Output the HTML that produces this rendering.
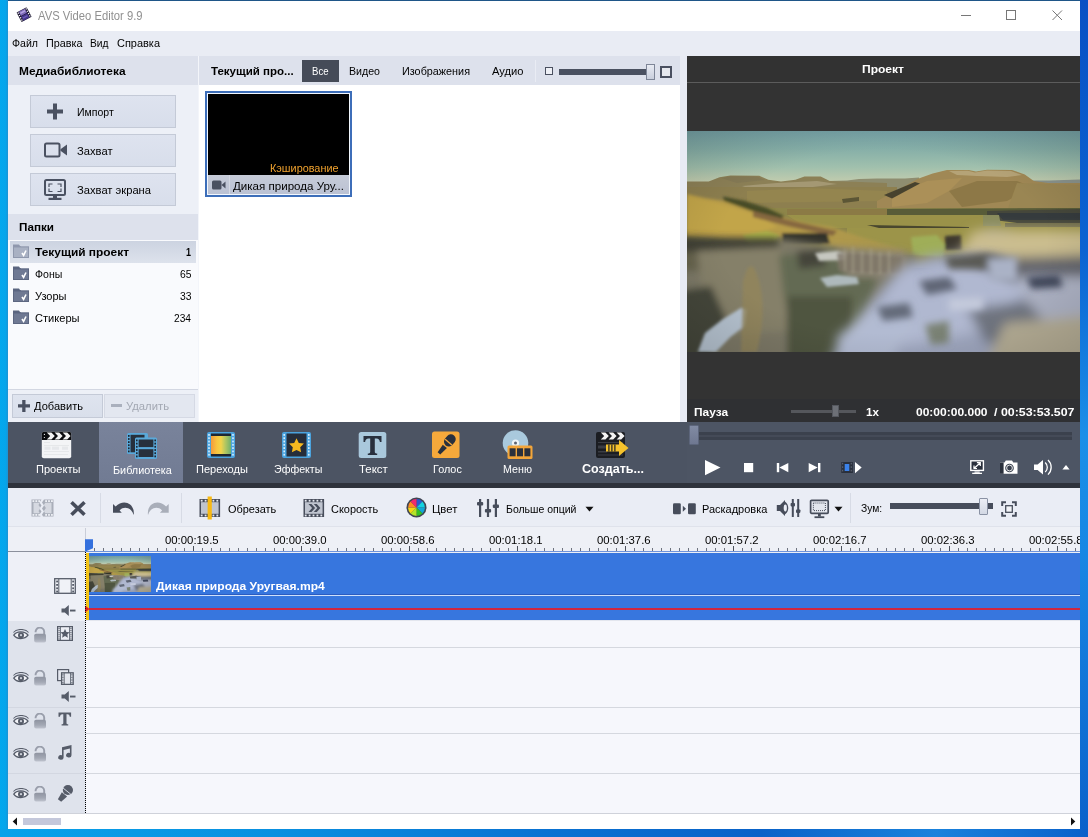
<!DOCTYPE html>
<html><head><meta charset="utf-8"><title>AVS Video Editor 9.9</title>
<style>
*{box-sizing:border-box;margin:0;padding:0}
html,body{width:1088px;height:837px;overflow:hidden}
body{position:relative;background:#eceff6;font-family:"Liberation Sans",sans-serif;font-size:11.5px;color:#111}
.a{position:absolute;display:block}
.t{position:absolute;white-space:nowrap;line-height:14px;transform-origin:0 0}
.b{font-weight:bold}
</style></head><body>
<div class="a" style="left:0px;top:0px;width:8px;height:837px;background:linear-gradient(90deg,#03a8ee 0,#05a5eb 70%,#1c93d4 100%);"></div>
<div class="a" style="left:1080px;top:0px;width:8px;height:837px;background:linear-gradient(#0950c4 0%,#0a63d2 30%,#1b8fe8 52%,#1787e4 66%,#0a60ca 100%);"></div>
<div class="a" style="left:0px;top:829px;width:1088px;height:8px;background:linear-gradient(90deg,#08a2ea 0%,#0a90e0 25%,#0a72d2 50%,#0a62c8 70%,#1a82dc 86%,#0a60ca 100%);"></div>
<div class="a" style="left:8px;top:0px;width:1072px;height:1px;background:#1f5688;"></div>
<div class="a" style="left:8px;top:1px;width:1072px;height:30px;background:#ffffff;"></div>
<svg class="a" style="left:14px;top:5px;" width="20" height="20" viewBox="0 0 20 20"><g transform="rotate(-28 10 9.700)"><rect x="4.400" y="4.300" width="11.400" height="10.800" rx="0.600" fill="#1c1731"/><rect x="6.700" y="4.700" width="6.800" height="4.700" fill="#7f6cbc"/><rect x="6.700" y="9.900" width="6.800" height="4.800" fill="#44358c"/><rect x="7.400" y="6" width="5.400" height="1.600" fill="#b4a4e0"/><rect x="7.400" y="11.400" width="5.400" height="1.500" fill="#6c5ab4"/><rect x="5.0" y="5.0" width="1.200" height="1.300" fill="#fff"/><rect x="5.0" y="7.6" width="1.200" height="1.300" fill="#fff"/><rect x="5.0" y="10.2" width="1.200" height="1.300" fill="#fff"/><rect x="5.0" y="12.8" width="1.200" height="1.300" fill="#fff"/><rect x="14.0" y="5.0" width="1.200" height="1.300" fill="#fff"/><rect x="14.0" y="7.6" width="1.200" height="1.300" fill="#fff"/><rect x="14.0" y="10.2" width="1.200" height="1.300" fill="#fff"/><rect x="14.0" y="12.8" width="1.200" height="1.300" fill="#fff"/></g></svg>
<div class="t" style="left:37.5px;top:8.84px;font-size:12px;color:#909090;transform:scaleX(0.9361);">AVS Video Editor 9.9</div>
<svg class="a" style="left:950px;top:4px;" width="120" height="24" viewBox="0 0 120 24"><g stroke="#777" stroke-width="1" fill="none"><path d="M11 11.500h10"/><rect x="56.500" y="6.500" width="9" height="9"/><path d="M102.500 6.500l9.500 9.500M112 6.500l-9.500 9.500"/></g></svg>
<div class="a" style="left:8px;top:31px;width:1072px;height:25px;background:#e9ecf4;"></div>
<div class="t" style="left:11.5px;top:36.02px;font-size:11.5px;color:#000;transform:scaleX(0.9196);">Файл</div>
<div class="t" style="left:45.5px;top:36.02px;font-size:11.5px;color:#000;transform:scaleX(0.9396);">Правка</div>
<div class="t" style="left:90px;top:36.02px;font-size:11.5px;color:#000;transform:scaleX(0.8892);">Вид</div>
<div class="t" style="left:117px;top:36.02px;font-size:11.5px;color:#000;transform:scaleX(0.9532);">Справка</div>
<div class="a" style="left:8px;top:56px;width:190px;height:366px;background:#edf0f7;"></div>
<div class="a" style="left:198px;top:56px;width:1px;height:366px;background:#f3f5fa;"></div>
<div class="a" style="left:8px;top:56px;width:190px;height:29px;background:#dde1ec;"></div>
<div class="t b" style="left:19px;top:64.02px;font-size:11.5px;color:#000;transform:scaleX(1.0337);">Медиабиблиотека</div>
<div class="a" style="left:30px;top:95px;width:146px;height:33px;background:linear-gradient(#dee3ef,#d8deeb);border:1px solid #c4cad7"></div>
<div class="a" style="left:30px;top:134px;width:146px;height:33px;background:linear-gradient(#dee3ef,#d8deeb);border:1px solid #c4cad7"></div>
<div class="a" style="left:30px;top:173px;width:146px;height:33px;background:linear-gradient(#dee3ef,#d8deeb);border:1px solid #c4cad7"></div>
<svg class="a" style="left:46px;top:103px;" width="18" height="17" viewBox="0 0 18 17"><path d="M7 0.5h4v6h6v4h-6v6h-4v-6h-6v-4h6z" fill="#4a5161"/></svg>
<div class="t" style="left:77px;top:105.02px;font-size:11.5px;color:#000;transform:scaleX(0.9128);">Импорт</div>
<svg class="a" style="left:44px;top:142px;" width="24" height="17" viewBox="0 0 24 17"><rect x="1" y="1.5" width="14.5" height="13" rx="1.5" fill="none" stroke="#4a5161" stroke-width="2"/><path d="M16.5 7.2L23 2.5v11l-6.5-4.7z" fill="#4a5161"/></svg>
<div class="t" style="left:77px;top:144.02px;font-size:11.5px;color:#000;transform:scaleX(0.9731);">Захват</div>
<svg class="a" style="left:44px;top:179px;" width="23" height="22" viewBox="0 0 23 22"><rect x="1" y="1" width="20" height="15" rx="1.5" fill="none" stroke="#4a5161" stroke-width="2"/><path d="M5 8V5h3.5M13.5 5H17v3M17 9.5v3h-3.5M8.500 12.5H5v-3" fill="none" stroke="#4a5161" stroke-width="1.2"/><rect x="9" y="16.5" width="4" height="2.5" fill="#4a5161"/><rect x="4.5" y="18.8" width="13" height="2.2" fill="#4a5161"/></svg>
<div class="t" style="left:77px;top:183.02px;font-size:11.5px;color:#000;transform:scaleX(0.9722);">Захват экрана</div>
<div class="a" style="left:8px;top:214px;width:190px;height:26px;background:#dde1ec;"></div>
<div class="t b" style="left:19px;top:220.02px;font-size:11.5px;color:#000;transform:scaleX(1.0165);">Папки</div>
<div class="a" style="left:8px;top:240px;width:190px;height:150px;background:#f9fafd;"></div>
<div class="a" style="left:10px;top:241px;width:186px;height:22px;background:linear-gradient(#ccd3e1,#dde2ec);"></div>
<svg class="a" style="left:13px;top:244px;" width="17" height="15" viewBox="0 0 17 15"><path d="M0 0.5h6l1.2 1.8H8V14H0z" fill="#8f98ad"/><rect x="0" y="2.3" width="16" height="11.7" fill="#8f98ad"/><rect x="1" y="3.5" width="14" height="9.5" fill="#a9b1c3"/><path d="M9 9l1.6 2.4L13 6.5" stroke="#fff" stroke-width="1.6" fill="none"/></svg>
<svg class="a" style="left:13px;top:266px;" width="17" height="15" viewBox="0 0 17 15"><path d="M0 0.5h6l1.2 1.8H8V14H0z" fill="#5c6680"/><rect x="0" y="2.3" width="16" height="11.7" fill="#5c6680"/><rect x="1" y="3.5" width="14" height="9.5" fill="#6f7993"/><path d="M9 9l1.6 2.4L13 6.5" stroke="#fff" stroke-width="1.6" fill="none"/></svg>
<svg class="a" style="left:13px;top:288px;" width="17" height="15" viewBox="0 0 17 15"><path d="M0 0.5h6l1.2 1.8H8V14H0z" fill="#5c6680"/><rect x="0" y="2.3" width="16" height="11.7" fill="#5c6680"/><rect x="1" y="3.5" width="14" height="9.5" fill="#6f7993"/><path d="M9 9l1.6 2.4L13 6.5" stroke="#fff" stroke-width="1.6" fill="none"/></svg>
<svg class="a" style="left:13px;top:310px;" width="17" height="15" viewBox="0 0 17 15"><path d="M0 0.5h6l1.2 1.8H8V14H0z" fill="#5c6680"/><rect x="0" y="2.3" width="16" height="11.7" fill="#5c6680"/><rect x="1" y="3.5" width="14" height="9.5" fill="#6f7993"/><path d="M9 9l1.6 2.4L13 6.5" stroke="#fff" stroke-width="1.6" fill="none"/></svg>
<div class="t b" style="left:35px;top:245.02px;font-size:11.5px;color:#000;transform:scaleX(1.0351);">Текущий проект</div>
<div class="t b" style="left:186px;top:245.02px;font-size:11.5px;color:#000;transform:scaleX(0.7817);">1</div>
<div class="t" style="left:35px;top:267.02px;font-size:11.5px;color:#000;transform:scaleX(0.9175);">Фоны</div>
<div class="t" style="left:179.5px;top:267.02px;font-size:11.5px;color:#000;transform:scaleX(0.8990);">65</div>
<div class="t" style="left:35px;top:289.02px;font-size:11.5px;color:#000;transform:scaleX(0.9586);">Узоры</div>
<div class="t" style="left:179.5px;top:289.02px;font-size:11.5px;color:#000;transform:scaleX(0.8990);">33</div>
<div class="t" style="left:35px;top:311.02px;font-size:11.5px;color:#000;transform:scaleX(0.9629);">Стикеры</div>
<div class="t" style="left:174px;top:311.02px;font-size:11.5px;color:#000;transform:scaleX(0.8860);">234</div>
<div class="a" style="left:8px;top:389px;width:190px;height:1px;background:#d3d7e2;"></div>
<div class="a" style="left:12px;top:394px;width:91px;height:24px;background:linear-gradient(#dfe4ef,#d9dfeb);border:1px solid #c4cad7"></div>
<div class="a" style="left:104px;top:394px;width:91px;height:24px;background:#e3e7f0;border:1px solid #d5d9e4"></div>
<svg class="a" style="left:18px;top:400px;" width="12" height="12" viewBox="0 0 12 12"><path d="M4.2 0h3.3v4.2H12v3.300H7.500V12H4.200V7.500H0V4.200h4.200z" fill="#4a5161"/></svg>
<div class="t" style="left:34px;top:398.52px;font-size:11.5px;color:#000;transform:scaleX(0.9641);">Добавить</div>
<div class="a" style="left:111px;top:404px;width:11px;height:3px;background:#aab0bd;"></div>
<div class="t" style="left:126px;top:398.52px;font-size:11.5px;color:#a3a8b3;transform:scaleX(0.9794);">Удалить</div>
<div class="a" style="left:199px;top:56px;width:481px;height:366px;background:#ffffff;"></div>
<div class="a" style="left:199px;top:56px;width:481px;height:29px;background:#dde1ec;"></div>
<div class="a" style="left:680px;top:56px;width:7px;height:366px;background:#e8ebf4;"></div>
<div class="t b" style="left:211px;top:64.02px;font-size:11.5px;color:#000;transform:scaleX(1.0010);">Текущий про...</div>
<div class="a" style="left:302px;top:60px;width:37px;height:22px;background:#454b58;"></div>
<div class="t" style="left:311.5px;top:64.02px;font-size:11.5px;color:#fff;transform:scaleX(0.8326);">Все</div>
<div class="t" style="left:349px;top:64.02px;font-size:11.5px;color:#000;transform:scaleX(0.9227);">Видео</div>
<div class="t" style="left:402px;top:64.02px;font-size:11.5px;color:#000;transform:scaleX(0.9409);">Изображения</div>
<div class="t" style="left:491.5px;top:64.02px;font-size:11.5px;color:#000;transform:scaleX(0.9710);">Аудио</div>
<div class="a" style="left:535px;top:60px;width:1px;height:22px;background:#e9ecf4;"></div>
<div class="a" style="left:545px;top:67px;width:8px;height:8px;background:#eef0f6;border:1.5px solid #4a5060"></div>
<div class="a" style="left:559px;top:69px;width:92px;height:6px;background:#4a5161;"></div>
<div class="a" style="left:646px;top:64px;width:9px;height:16px;background:linear-gradient(#e8ebf3,#c9cfdd);border:1px solid #7e8698"></div>
<div class="a" style="left:660px;top:66px;width:12px;height:12px;background:#e6e8ee;border:2px solid #4a5060"></div>
<div class="a" style="left:205px;top:91px;width:147px;height:106px;background:#3d6eb9;"></div>
<div class="a" style="left:207px;top:93px;width:143px;height:102px;background:#f2f7fe;"></div>
<div class="a" style="left:208px;top:94px;width:141px;height:81px;background:#000000;"></div>
<div class="a" style="left:208px;top:175px;width:141px;height:19px;background:linear-gradient(#c6cbd8,#bbc2d3);"></div>
<div class="a" style="left:229px;top:175px;width:1px;height:19px;background:#d3d7e2;"></div>
<div class="t" style="left:270px;top:161.02px;font-size:11.5px;color:#f0a22e;transform:scaleX(0.9441);">Кэширование</div>
<svg class="a" style="left:212px;top:180px;" width="14" height="10" viewBox="0 0 14 10"><rect x="0" y="0.5" width="9.5" height="9" rx="1.5" fill="#4a5161"/><path d="M9.5 5l4-3.500v7z" fill="#4a5161"/></svg>
<div class="t" style="left:233px;top:179.02px;font-size:11.5px;color:#000;transform:scaleX(1.0051);">Дикая природа Уру...</div>
<div class="a" style="left:687px;top:56px;width:393px;height:366px;background:#333333;"></div>
<div class="a" style="left:687px;top:56px;width:393px;height:26px;background:#323232;"></div>
<div class="a" style="left:687px;top:82px;width:393px;height:1px;background:#5c5c5c;"></div>
<div class="t b" style="left:862px;top:62.22px;font-size:11.5px;color:#fff;transform:scaleX(1.0474);">Проект</div>
<svg class="a" style="left:687px;top:131px;" width="393" height="221" viewBox="0 0 393 221"><defs>
<linearGradient id="sky" x1="0" y1="0" x2="0" y2="1"><stop offset="0" stop-color="#76a2a6"/><stop offset="0.300" stop-color="#86afa8"/><stop offset="0.600" stop-color="#a0c0ad"/><stop offset="0.850" stop-color="#c2ccae"/><stop offset="1" stop-color="#d2d2b2"/></linearGradient>
<radialGradient id="vig" cx="0.5" cy="0.5" r="0.75"><stop offset="0.55" stop-color="#000" stop-opacity="0"/><stop offset="1" stop-color="#000" stop-opacity="0.170"/></radialGradient>
<linearGradient id="gr1" x1="0" y1="0" x2="1" y2="0"><stop offset="0" stop-color="#bda047"/><stop offset="0.500" stop-color="#b69b49"/><stop offset="1" stop-color="#a5944d"/></linearGradient>
<filter id="b1" x="-5%" y="-10%" width="110%" height="120%"><feGaussianBlur stdDeviation="0.700"/></filter>
<filter id="b2" x="-10%" y="-10%" width="120%" height="120%"><feGaussianBlur stdDeviation="1.600"/></filter>
<filter id="b4" x="-20%" y="-20%" width="140%" height="140%"><feGaussianBlur stdDeviation="3.500"/></filter>
<filter id="b7" x="-20%" y="-20%" width="140%" height="140%"><feGaussianBlur stdDeviation="6"/></filter>
<clipPath id="cp"><rect x="0" y="0" width="393" height="221"/></clipPath>
</defs>
<g id="landg" clip-path="url(#cp)">
<rect width="393" height="60" fill="url(#sky)"/>
<g filter="url(#b1)">
<!-- far bluish ridge -->
<path d="M140 50 L160 49.500 L172 48 L190 47.500 L218 47.600 L232 46.500 V60 H140z" fill="#8e8d70"/>
<path d="M346 49.500 L362 49.500 L393 48.500 V58 H346z" fill="#8a938c"/>
<!-- left hills -->
<path d="M0 50.600 L21.700 50.600 L32.500 46.200 L43.400 44.400 L72.300 44.800 L81.300 48.800 L94 50.600 L108.400 48.800 L117.400 45.500 L133.700 45.500 L142.700 49.900 L159 50.600 L200 52 V80 H0z" fill="#8c8057"/>
<path d="M34 47 L44 45.200 L70 45.600 L78 49 L50 52 z" fill="#857a55"/>
<path d="M55 55 L90 52 L130 50 L150 53 L110 58 L70 60z" fill="#a49873"/>
<path d="M0 56 H210 V84 H0z" fill="#8d7f50"/>
<path d="M60 60 L120 57 L200 60 L200 70 L60 72z" fill="#94854f"/>
<!-- big right hill -->
<path d="M190 70 L205 62 L231 47.700 L245.700 42.600 L260 39 L281.800 39 L289 40.500 L300 38.700 L325 39 L337.800 43.400 L346.800 49.900 L361 52 L393 52 V84 H190z" fill="#a08854"/>
<path d="M262 40 L281 39.700 L288 41.500 L300 39.500 L324 40 L335 44 L320 46 L290 45 L270 44z" fill="#b5a377"/>
<path d="M205 64 L240 50 L275 47 L262 60 L240 72 L205 76z" fill="#ab9058"/>
<path d="M262 60 L290 50 L330 50 L345 56 L320 70 L275 76z" fill="#8d7847"/>
<path d="M330 52 L393 54 V80 H320z" fill="#9a8652"/>
<path d="M197 64 L228 51 L233 52.500 L205 67.500z" fill="#47432f"/>
<path d="M155 68 L172 66 L172 70 L156 72z" fill="#5c5636"/>
</g>
<!-- plains -->
<g filter="url(#b1)">
<rect x="0" y="77" width="393" height="60" fill="#8d8548"/>
<path d="M100 78 H393 V84 H100z" fill="#8b7a44"/>
<path d="M200 78 L393 77 V85 H200z" fill="#595b39"/>
<path d="M100 84 H393 V97 H120z" fill="#9a9249"/>
<path d="M300 80 L393 78 V92 H330 L300 88z" fill="#45463a"/>
<path d="M310 82 H393 V89 H316z" fill="#353a3c"/>
<path d="M180 94 L282 96 L282 100 L200 99z" fill="#48462e"/>
<path d="M160 97 H393 V124 H160z" fill="#9c9449"/>
<path d="M318 92 H393 V96 H318z" fill="#6f6d4c"/>
<path d="M296 84 L312 84 L314 95 L296 95z" fill="#8a8c5c"/>
</g>
<!-- left grassy slope -->
<g filter="url(#b2)">
<path d="M0 63 L18 67 L40 70.500 L97.500 86.700 L119 92 L144.500 95.700 L170 104.800 L195 112 L216.800 119 L216.800 124 L151.700 117 L119 110 L94 106 L65 110 L36 108 L0 106z" fill="url(#gr1)"/>
<path d="M0 66 L30 72 L70 84 L90 96 L60 104 L0 100z" fill="#c2a548"/>
<path d="M36 65.500 L58 70 L80 77 L97 85 L94 89 L62 79 L37 70z" fill="#474c25"/>
<path d="M66 80 L110 91 L150 100 L146 105 L100 95 L66 86z" fill="#86683f"/>
<path d="M56 104 L80 100 L92 104 L86 116 L62 116z" fill="#adb44a"/>
<path d="M95 102 L140 102 L143 113 L96 114z" fill="#33322a"/>
<path d="M224 106 L250 104 L258 114 L256 126 L226 124z" fill="#9fae58"/>
<path d="M258 105 L274 104 L275 119 L258 119z" fill="#3c392e"/>
</g>
<!-- shadowed foreground -->
<g filter="url(#b4)">
<path d="M-10 106 L40 108 L95 108 L150 116 L215 122 L230 124 L230 240 L-10 240z" fill="#7b7866"/>
<path d="M-10 106 L50 108 L80 118 L60 140 L-10 140z" fill="#66644e"/><path d="M-10 105 L40 107 L92 107 L92 119 L-10 121z" fill="#3f4034"/>
<path d="M10 120 L95 116 L100 200 L20 205z" fill="#858069"/>
<path d="M92 124 L150 120 L190 150 L170 215 L110 225 L96 160z" fill="#646a52"/>
<path d="M148 116 L218 120 L222 146 L160 146z" fill="#8c8473"/>
<path d="M-10 160 L24 155 L40 190 L20 230 L-10 230z" fill="#45473a"/>
<path d="M100 165 H165 V235 H100z" fill="#4f543f"/>
<path d="M110 120 L135 118 L140 135 L112 138z" fill="#45453a"/>
</g>
<g filter="url(#b2)">
<path d="M10.800 221 L18 202 L36 187.900 L54 177 L59.600 178.800 L57.800 195 L43.400 206 L29 221z" fill="#b6c3d0"/>
<path d="M133 147 L150 144 L170 146 L172 153 L140 156z" fill="#aeb9bc"/><path d="M128 122 L150 120 L160 123 L158 129 L132 130z" fill="#c6c7c0"/>
<path d="M56 150 Q64 120 72 150 T70 221 L54 221z" fill="#938659" opacity="0.750"/>
<path d="M150 122 L215 126 L215 142 L152 140z" fill="#7d7466" opacity="0.800"/>
<g stroke="#b9b29a" stroke-width="1.200" opacity="0.700"><path d="M158 118v22M166 116v26M175 120v22M184 118v25M193 121v22M202 120v22"/></g>
</g>
<!-- big blurred rock on right -->
<g filter="url(#b7)">
<path d="M144.500 226 L155.300 206 L169.800 187.900 L184.200 169.800 L202.300 148 L220.400 131.900 L245.700 124.600 L271 122.800 L281.800 108.400 L299.900 97.500 L325 99.300 L346.800 104.800 L410 112 V240 H140z" fill="#9ea6be"/>
<path d="M215 140 L300 128 L345 150 L300 200 L220 215 L175 200z" fill="#b0b8d0"/>
<path d="M286 100 L410 100 L410 128 L340 128 L290 122 L272 124z" fill="#cbbd8f"/>
<path d="M275 128 L410 124 V150 L330 152z" fill="#63656c"/>
<path d="M330 146 H410 V195 H345z" fill="#adb2c4"/>
<path d="M280 178 L340 170 L362 196 L300 214z" fill="#6f7580"/>
<path d="M318 192 L410 184 V240 H296z" fill="#b6ae96"/>
<path d="M150 206 L196 170 L232 188 L202 232 L150 232z" fill="#b2bbd2"/>
</g>
<g filter="url(#b4)">
<path d="M232 150 L262 146 L270 158 L240 164z" fill="#5e6575"/>
<path d="M190 176 L222 172 L226 186 L196 190z" fill="#636a79"/>
<path d="M340 146 L372 144 L376 156 L344 158z" fill="#40475a"/>
<path d="M258 126 L300 122 L330 128 L300 138 L262 138z" fill="#5a5a54"/>
<path d="M262 168 L296 166 L296 178 L262 180z" fill="#c4cadc"/>
<path d="M238 194 L262 190 L262 212 L244 214z" fill="#7a8274"/>
<path d="M300 128 L330 126 L330 150 L304 150z" fill="#aab2c6"/>
</g>
<rect width="393" height="221" fill="url(#vig)"/>
</g></svg>
<div class="a" style="left:687px;top:399px;width:393px;height:23px;background:#2f3033;"></div>
<div class="t b" style="left:693.5px;top:405.02px;font-size:11.5px;color:#fff;transform:scaleX(1.0345);">Пауза</div>
<div class="a" style="left:791px;top:410px;width:65px;height:3px;background:#55575c;"></div>
<div class="a" style="left:832px;top:405px;width:7px;height:12px;background:#6d7077;border:1px solid #55585f"></div>
<div class="t b" style="left:865.5px;top:405.02px;font-size:11.5px;color:#fff;transform:scaleX(1.0163);">1x</div>
<div class="t b" style="left:916px;top:405.02px;font-size:11.5px;color:#fff;transform:scaleX(1.0450);">00:00:00.000</div>
<div class="t b" style="left:994px;top:405.02px;font-size:11.5px;color:#fff;transform:scaleX(1.0761);">/ 00:53:53.507</div>
<div class="a" style="left:8px;top:422px;width:1072px;height:61px;background:#4c5463;"></div>
<div class="a" style="left:687px;top:422px;width:393px;height:61px;background:#4d5564;"></div>
<div class="a" style="left:99px;top:422px;width:84px;height:61px;background:linear-gradient(#79839b,#717b93);"></div>
<div class="a" style="left:8px;top:483px;width:1072px;height:5px;background:#2f333c;"></div>
<svg class="a" style="left:41px;top:431px;" width="32" height="28" viewBox="0 0 32 28"><rect x="0.800" y="0.800" width="29.400" height="26.400" rx="2" fill="#f3f4f6"/><path d="M0.800 9V2.800a2 2 0 0 1 2-2h25.400a2 2 0 0 1 2 2V9z" fill="#0b0c0f"/><path d="M5.8 1.400h4.600l3.400 3.600-3.400 3.600h-4.600l3.400-3.600zM13.6 1.400h4.600l3.400 3.600-3.400 3.600h-4.600l3.400-3.600zM21.6 1.400h4.600l3.400 3.600-3.400 3.600h-4.600l3.400-3.600z" fill="#f4f4f4"/><circle cx="3.400" cy="3.400" r="0.600" fill="#eee"/><circle cx="3.400" cy="6.500" r="0.600" fill="#eee"/><g fill="#e3e5e8"><rect x="3" y="11.200" width="6" height="0.800"/><rect x="3" y="14" width="25" height="0.800"/><rect x="3" y="20" width="25" height="0.800"/><rect x="3" y="23.200" width="24" height="0.800"/></g><g fill="#e6e8eb"><rect x="3.500" y="15.600" width="6" height="3.200"/><rect x="11" y="15.600" width="7" height="3.200"/><rect x="21" y="15.600" width="6" height="3.200"/></g></svg>
<div class="t" style="left:35.6px;top:462.02px;font-size:11.5px;color:#ffffff;transform:scaleX(0.9621);">Проекты</div>
<svg class="a" style="left:126px;top:432px;" width="32" height="28" viewBox="0 0 32 28"><rect x="1" y="1" width="21" height="21" rx="1.500" fill="#5aa9da"/><rect x="4.500" y="2.800" width="14" height="17.500" fill="#27303c"/><rect x="2.0" y="3.0" width="1.6" height="1.8" fill="#1d2530"/><rect x="2.0" y="6.1" width="1.6" height="1.8" fill="#1d2530"/><rect x="2.0" y="9.2" width="1.6" height="1.8" fill="#1d2530"/><rect x="2.0" y="12.3" width="1.6" height="1.8" fill="#1d2530"/><rect x="2.0" y="15.4" width="1.6" height="1.8" fill="#1d2530"/><rect x="2.0" y="18.5" width="1.6" height="1.8" fill="#1d2530"/><rect x="9" y="5.500" width="22" height="21.500" rx="1.500" fill="#5aa9da"/><rect x="12.600" y="7.500" width="14.800" height="7.600" fill="#27303c"/><rect x="12.600" y="17.200" width="14.800" height="7.800" fill="#27303c"/><rect x="10.0" y="7.5" width="1.6" height="1.8" fill="#1d2530"/><rect x="10.0" y="10.7" width="1.6" height="1.8" fill="#1d2530"/><rect x="10.0" y="13.9" width="1.6" height="1.8" fill="#1d2530"/><rect x="10.0" y="17.1" width="1.6" height="1.8" fill="#1d2530"/><rect x="10.0" y="20.3" width="1.6" height="1.8" fill="#1d2530"/><rect x="10.0" y="23.5" width="1.6" height="1.8" fill="#1d2530"/><rect x="28.4" y="7.5" width="1.6" height="1.8" fill="#1d2530"/><rect x="28.4" y="10.7" width="1.6" height="1.8" fill="#1d2530"/><rect x="28.4" y="13.9" width="1.6" height="1.8" fill="#1d2530"/><rect x="28.4" y="17.1" width="1.6" height="1.8" fill="#1d2530"/><rect x="28.4" y="20.3" width="1.6" height="1.8" fill="#1d2530"/><rect x="28.4" y="23.5" width="1.6" height="1.8" fill="#1d2530"/></svg>
<div class="t" style="left:112.8px;top:463.02px;font-size:11.5px;color:#ffffff;transform:scaleX(0.9403);">Библиотека</div>
<svg class="a" style="left:206px;top:431px;" width="30" height="28" viewBox="0 0 30 28"><defs><linearGradient id="tg" x1="0" y1="0" x2="1" y2="0"><stop offset="0" stop-color="#f39a3c"/><stop offset="0.300" stop-color="#f7c640"/><stop offset="0.500" stop-color="#f1d34a"/><stop offset="0.700" stop-color="#b7c860"/><stop offset="1" stop-color="#6fb06e"/></linearGradient></defs><rect x="1" y="1" width="28" height="26" rx="2" fill="#4ba3de"/><rect x="5" y="2.500" width="20" height="23" fill="#1f2733"/><rect x="5" y="5" width="20" height="18" fill="url(#tg)"/><rect x="2.2" y="3.0" width="1.6" height="1.8" fill="#d9eefb"/><rect x="2.2" y="6.3" width="1.6" height="1.8" fill="#d9eefb"/><rect x="2.2" y="9.6" width="1.6" height="1.8" fill="#d9eefb"/><rect x="2.2" y="12.9" width="1.6" height="1.8" fill="#d9eefb"/><rect x="2.2" y="16.2" width="1.6" height="1.8" fill="#d9eefb"/><rect x="2.2" y="19.5" width="1.6" height="1.8" fill="#d9eefb"/><rect x="2.2" y="22.8" width="1.6" height="1.8" fill="#d9eefb"/><rect x="26.2" y="3.0" width="1.6" height="1.8" fill="#d9eefb"/><rect x="26.2" y="6.3" width="1.6" height="1.8" fill="#d9eefb"/><rect x="26.2" y="9.6" width="1.6" height="1.8" fill="#d9eefb"/><rect x="26.2" y="12.9" width="1.6" height="1.8" fill="#d9eefb"/><rect x="26.2" y="16.2" width="1.6" height="1.8" fill="#d9eefb"/><rect x="26.2" y="19.5" width="1.6" height="1.8" fill="#d9eefb"/><rect x="26.2" y="22.8" width="1.6" height="1.8" fill="#d9eefb"/></svg>
<div class="t" style="left:195.5px;top:462.02px;font-size:11.5px;color:#ffffff;transform:scaleX(0.9622);">Переходы</div>
<svg class="a" style="left:281px;top:431px;" width="31" height="28" viewBox="0 0 31 28"><rect x="1" y="1" width="29" height="26" rx="2" fill="#4ba3de"/><rect x="5.500" y="2.500" width="20" height="23" fill="#262d3a"/><path d="M15.500 7.200l2.300 4.700 5.100 0.700-3.700 3.600 0.900 5.100-4.600-2.400-4.600 2.400 0.900-5.100-3.700-3.600 5.100-0.700z" fill="#f7b91f"/><rect x="2.4" y="3.0" width="1.6" height="1.8" fill="#d9eefb"/><rect x="2.4" y="6.3" width="1.6" height="1.8" fill="#d9eefb"/><rect x="2.4" y="9.6" width="1.6" height="1.8" fill="#d9eefb"/><rect x="2.4" y="12.9" width="1.6" height="1.8" fill="#d9eefb"/><rect x="2.4" y="16.2" width="1.6" height="1.8" fill="#d9eefb"/><rect x="2.4" y="19.5" width="1.6" height="1.8" fill="#d9eefb"/><rect x="2.4" y="22.8" width="1.6" height="1.8" fill="#d9eefb"/><rect x="27.0" y="3.0" width="1.6" height="1.8" fill="#d9eefb"/><rect x="27.0" y="6.3" width="1.6" height="1.8" fill="#d9eefb"/><rect x="27.0" y="9.6" width="1.6" height="1.8" fill="#d9eefb"/><rect x="27.0" y="12.9" width="1.6" height="1.8" fill="#d9eefb"/><rect x="27.0" y="16.2" width="1.6" height="1.8" fill="#d9eefb"/><rect x="27.0" y="19.5" width="1.6" height="1.8" fill="#d9eefb"/><rect x="27.0" y="22.8" width="1.6" height="1.8" fill="#d9eefb"/></svg>
<div class="t" style="left:274px;top:462.02px;font-size:11.5px;color:#ffffff;transform:scaleX(0.9258);">Эффекты</div>
<svg class="a" style="left:358px;top:431px;" width="29" height="28" viewBox="0 0 29 28"><rect x="0.700" y="1" width="27.600" height="26" rx="2.500" fill="#a9c8dc"/><path d="M5.500 5h18v6h-1.600c-0.300-2.300-1.300-3.600-3.400-3.600h-1.700v13.300c0 1.300 0.600 1.700 2.400 1.800v1.500h-9.400v-1.500c1.800-0.100 2.400-0.500 2.400-1.800V7.400h-1.700c-2.100 0-3.100 1.300-3.400 3.600H5.500z" fill="#28303e"/></svg>
<div class="t" style="left:359.2px;top:462.02px;font-size:11.5px;color:#ffffff;transform:scaleX(0.9947);">Текст</div>
<svg class="a" style="left:432px;top:431px;" width="28" height="28" viewBox="0 0 28 28"><rect x="0" y="0.500" width="27.500" height="26.500" rx="2.500" fill="#f6a93b"/><g transform="rotate(40 14 14)"><rect x="9.200" y="1.500" width="9.600" height="13" rx="4.800" fill="#28303e"/><path d="M11.300 15.800h5.400l-1 9.200h-3.400z" fill="#28303e"/><rect x="9.600" y="9.500" width="8.800" height="1.300" fill="#f6a93b"/></g></svg>
<div class="t" style="left:433px;top:462.02px;font-size:11.5px;color:#ffffff;transform:scaleX(0.9416);">Голос</div>
<svg class="a" style="left:501px;top:430px;" width="33" height="30" viewBox="0 0 33 30"><circle cx="14.500" cy="13" r="12.800" fill="#a9c9dd"/><circle cx="14.500" cy="13" r="3.600" fill="#eef4f8"/><circle cx="14.500" cy="13" r="1.500" fill="#5b6270"/><rect x="6.500" y="15.500" width="25" height="13.500" rx="1.500" fill="#f2a53a"/><rect x="8.600" y="18.300" width="6" height="8" fill="#2a303c"/><rect x="16" y="18.300" width="6" height="8" fill="#2a303c"/><rect x="23.400" y="18.300" width="6" height="8" fill="#2a303c"/></svg>
<div class="t" style="left:503.4px;top:462.02px;font-size:11.5px;color:#ffffff;transform:scaleX(0.9298);">Меню</div>
<svg class="a" style="left:595px;top:431px;" width="35" height="28" viewBox="0 0 35 28"><rect x="1" y="1" width="29" height="26" rx="2" fill="#1b1d22"/><path d="M5.8 1.400h4.600l3.400 3.600-3.400 3.600h-4.600l3.400-3.600zM13.6 1.400h4.600l3.400 3.600-3.400 3.600h-4.600l3.400-3.600zM21.6 1.400h4.600l3.400 3.600-3.400 3.600h-4.600l3.400-3.600z" fill="#f4f4f4"/><g fill="#3a3d44"><rect x="3" y="11" width="25" height="1"/><rect x="3" y="14.500" width="9" height="3"/><rect x="3" y="20" width="9" height="1.500"/><rect x="3" y="23.500" width="25" height="1"/></g><path d="M11 13.500h13v-4.500l9.500 8-9.500 8v-4.500h-13z" fill="#f5c22c"/><g fill="#1b1d22"><rect x="13.300" y="13.500" width="1.200" height="7"/><rect x="16.300" y="13.500" width="1.200" height="7"/><rect x="19.300" y="13.500" width="1.200" height="7"/></g></svg>
<div class="t b" style="left:582px;top:461.67px;font-size:12.5px;color:#ffffff;transform:scaleX(1.0029);">Создать...</div>
<div class="a" style="left:699px;top:432px;width:373px;height:8px;background:#3b414d;"></div>
<div class="a" style="left:699px;top:435px;width:373px;height:2px;background:#444a57;"></div>
<div class="a" style="left:689px;top:425px;width:10px;height:20px;background:linear-gradient(#818ba3,#6f7891);border:1px solid #5d667c;border-radius:1px"></div>
<svg class="a" style="left:700px;top:456px;" width="170" height="24" viewBox="0 0 170 24"><g fill="#fff"><path d="M5 4l15.500 7.600L5 19.200z"/><rect x="44" y="7" width="9.200" height="9.200"/><rect x="76.800" y="7" width="2.400" height="9.200"/><path d="M88.300 7v9.200l-9-4.600z"/><rect x="118" y="7" width="2.400" height="9.200"/><path d="M108.700 7v9.200l9-4.600z"/><path d="M155 6l6.700 5.600-6.700 5.600z"/></g><rect x="141.300" y="6" width="11.600" height="11" fill="#2a303c"/><rect x="144.700" y="8" width="4.600" height="7" fill="#3b82ea"/><rect x="142.0" y="6.8" width="1.2" height="1.6" fill="#59606e"/><rect x="142.0" y="10.3" width="1.2" height="1.6" fill="#59606e"/><rect x="142.0" y="13.8" width="1.2" height="1.6" fill="#59606e"/><rect x="150.7" y="6.8" width="1.2" height="1.6" fill="#59606e"/><rect x="150.7" y="10.3" width="1.2" height="1.6" fill="#59606e"/><rect x="150.7" y="13.8" width="1.2" height="1.6" fill="#59606e"/></svg>
<svg class="a" style="left:968px;top:458px;" width="104" height="19" viewBox="0 0 104 19"><rect x="2.800" y="2.800" width="12.600" height="9.600" fill="#2a303c" stroke="#fff" stroke-width="1.400"/><rect x="6.500" y="13.500" width="5.200" height="1.200" fill="#fff"/><rect x="4.200" y="14.700" width="9.800" height="1.300" fill="#fff"/><path d="M6 10.500L12.300 4.700M8.900 4.700h3.400v3.400M6 7.500v3h3" stroke="#fff" stroke-width="1.200" fill="none"/><path d="M32 4.500h4.500l1.300-2h6.200l1.300 2h4.200v11.300H32z" fill="#fff"/><circle cx="41.500" cy="10" r="4.300" fill="#3a414e"/><circle cx="41.500" cy="10" r="2.900" fill="none" stroke="#fff" stroke-width="0.900"/><rect x="32" y="4.500" width="3.600" height="11.300" fill="#2a303c"/><path d="M66 6.500h3.600l5.400-4.500v14.500l-5.400-4.500H66z" fill="#fff"/><path d="M77.200 4.500a6.500 6.500 0 0 1 0 9.600M80 2a10 10 0 0 1 0 14.600" stroke="#fff" stroke-width="1.300" fill="none"/><path d="M94.400 11.400l3.600-4.400 3.600 4.400z" fill="#fff"/></svg>
<div class="a" style="left:8px;top:488px;width:1072px;height:39px;background:#eaedf5;"></div>
<div class="a" style="left:8px;top:526px;width:1072px;height:1px;background:#dfe2eb;"></div>
<div class="a" style="left:100px;top:493px;width:1px;height:30px;background:#d7dbe5;"></div>
<div class="a" style="left:181px;top:493px;width:1px;height:30px;background:#d7dbe5;"></div>
<div class="a" style="left:850px;top:493px;width:1px;height:30px;background:#d7dbe5;"></div>
<svg class="a" style="left:31px;top:499px;" width="23" height="18" viewBox="0 0 23 18"><path d="M0.500 0.500h10l-2 3 2 3-2 3 2 3-2 3 1 2H0.500z" fill="#a9aeb9"/><path d="M22.500 0.500h-9.500l-2 3 2 3-2 3 2 3-2 3 1 2h10.500z" fill="#a9aeb9"/><path d="M2.500 3.800h6.300l-1.300 2.200 2 3-2 3 1.300 2.200H2.500z" fill="#d6d9e1"/><path d="M20.500 3.800h-6.300l-1.300 2.200 2 3-2 3 1.300 2.200h6.300z" fill="#d6d9e1"/><rect x="1.5" y="1.2" width="1.8" height="1.8" fill="#eef0f5"/><rect x="4.4" y="1.2" width="1.8" height="1.8" fill="#eef0f5"/><rect x="7.3" y="1.2" width="1.8" height="1.8" fill="#eef0f5"/><rect x="1.5" y="15.0" width="1.8" height="1.8" fill="#eef0f5"/><rect x="4.4" y="15.0" width="1.8" height="1.8" fill="#eef0f5"/><rect x="7.3" y="15.0" width="1.8" height="1.8" fill="#eef0f5"/><rect x="14.2" y="1.2" width="1.8" height="1.8" fill="#eef0f5"/><rect x="17.1" y="1.2" width="1.8" height="1.8" fill="#eef0f5"/><rect x="20.0" y="1.2" width="1.8" height="1.8" fill="#eef0f5"/><rect x="14.2" y="15.0" width="1.8" height="1.8" fill="#eef0f5"/><rect x="17.1" y="15.0" width="1.8" height="1.8" fill="#eef0f5"/><rect x="20.0" y="15.0" width="1.8" height="1.8" fill="#eef0f5"/></svg>
<svg class="a" style="left:69px;top:500px;" width="18" height="17" viewBox="0 0 18 17"><path d="M2.500 2.200L15.500 14.800M15.500 2.200L2.500 14.800" stroke="#474d5b" stroke-width="3.600"/></svg>
<svg class="a" style="left:112px;top:501px;" width="23" height="15" viewBox="0 0 23 15"><path d="M1 3V11.800H9.800L7.600 9.600C10.500 5.200 18.800 5 21.700 14C23.300 2.500 11.500 -3 3.600 5.600z" fill="#474d5b"/></svg>
<svg class="a" style="left:147.3px;top:501px;" width="23" height="15" viewBox="0 0 23 15"><g transform="translate(22.700,0) scale(-1,1)"><path d="M1 3V11.800H9.800L7.600 9.600C10.500 5.200 18.800 5 21.700 14C23.300 2.500 11.500 -3 3.600 5.600z" fill="#a9aeb9"/></g></svg>
<svg class="a" style="left:199px;top:496px;" width="22" height="24" viewBox="0 0 22 24"><rect x="0.500" y="3" width="20.600" height="18" fill="#474d5b"/><rect x="2" y="6.200" width="17.600" height="11.600" fill="#bfc4cf"/><rect x="1.8" y="3.8" width="1.8" height="1.8" fill="#e8ebf2"/><rect x="5.7" y="3.8" width="1.8" height="1.8" fill="#e8ebf2"/><rect x="9.6" y="3.8" width="1.8" height="1.8" fill="#e8ebf2"/><rect x="13.5" y="3.8" width="1.8" height="1.8" fill="#e8ebf2"/><rect x="17.4" y="3.8" width="1.8" height="1.8" fill="#e8ebf2"/><rect x="1.8" y="18.6" width="1.8" height="1.8" fill="#e8ebf2"/><rect x="5.7" y="18.6" width="1.8" height="1.8" fill="#e8ebf2"/><rect x="9.6" y="18.6" width="1.8" height="1.8" fill="#e8ebf2"/><rect x="13.5" y="18.6" width="1.8" height="1.8" fill="#e8ebf2"/><rect x="17.4" y="18.6" width="1.8" height="1.8" fill="#e8ebf2"/><rect x="8.600" y="0.500" width="4.200" height="23" fill="#f8b913"/></svg>
<div class="t" style="left:227.7px;top:501.72px;font-size:11.5px;color:#000;transform:scaleX(0.9518);">Обрезать</div>
<svg class="a" style="left:303px;top:499px;" width="22" height="18" viewBox="0 0 22 18"><rect x="0.500" y="0" width="20.600" height="18" fill="#474d5b"/><rect x="2" y="3.200" width="17.600" height="11.600" fill="#bfc4cf"/><rect x="1.8" y="0.8" width="1.8" height="1.8" fill="#e8ebf2"/><rect x="5.7" y="0.8" width="1.8" height="1.8" fill="#e8ebf2"/><rect x="9.6" y="0.8" width="1.8" height="1.8" fill="#e8ebf2"/><rect x="13.5" y="0.8" width="1.8" height="1.8" fill="#e8ebf2"/><rect x="17.4" y="0.8" width="1.8" height="1.8" fill="#e8ebf2"/><rect x="1.8" y="15.6" width="1.8" height="1.8" fill="#e8ebf2"/><rect x="5.7" y="15.6" width="1.8" height="1.8" fill="#e8ebf2"/><rect x="9.6" y="15.6" width="1.8" height="1.8" fill="#e8ebf2"/><rect x="13.5" y="15.6" width="1.8" height="1.8" fill="#e8ebf2"/><rect x="17.4" y="15.6" width="1.8" height="1.8" fill="#e8ebf2"/><path d="M5.500 5h3l3.600 4-3.600 4h-3l3.600-4zM10.800 5h3l3.600 4-3.600 4h-3l3.600-4z" fill="#474d5b"/></svg>
<div class="t" style="left:330.6px;top:501.72px;font-size:11.5px;color:#000;transform:scaleX(0.9524);">Скорость</div>
<svg class="a" style="left:405.5px;top:497.3px;" width="21" height="21" viewBox="0 0 21 21"><circle cx="10.500" cy="10.500" r="10" fill="#3f4552"/><path d="M10.50 10.50L10.50 2.10A8.40 8.40 0 0 1 16.44 4.56z" fill="#2a5ad0"/><path d="M10.50 10.50L16.44 4.56A8.40 8.40 0 0 1 18.90 10.50z" fill="#12d2e0"/><path d="M10.50 10.50L18.90 10.50A8.40 8.40 0 0 1 16.44 16.44z" fill="#12a6d6"/><path d="M10.50 10.50L16.44 16.44A8.40 8.40 0 0 1 10.50 18.90z" fill="#34c022"/><path d="M10.50 10.50L10.50 18.90A8.40 8.40 0 0 1 4.56 16.44z" fill="#b4e426"/><path d="M10.50 10.50L4.56 16.44A8.40 8.40 0 0 1 2.10 10.50z" fill="#f2d812"/><path d="M10.50 10.50L2.10 10.50A8.40 8.40 0 0 1 4.56 4.56z" fill="#ff8c22"/><path d="M10.50 10.50L4.56 4.56A8.40 8.40 0 0 1 10.50 2.10z" fill="#f02a6e"/></svg>
<div class="t" style="left:432.4px;top:501.92px;font-size:11.5px;color:#000;transform:scaleX(0.9818);">Цвет</div>
<svg class="a" style="left:476px;top:498px;" width="24" height="20" viewBox="0 0 24 20"><g fill="#474d5b"><rect x="3" y="1" width="2.200" height="18"/><rect x="10.900" y="1" width="2.200" height="18"/><rect x="18.800" y="1" width="2.200" height="18"/><rect x="1" y="4" width="6.200" height="3.600" rx="1"/><rect x="8.900" y="11" width="6.200" height="3.600" rx="1"/><rect x="16.800" y="6.500" width="6.200" height="3.600" rx="1"/></g></svg>
<div class="t" style="left:505.6px;top:501.92px;font-size:11.5px;color:#000;transform:scaleX(0.9111);">Больше опций</div>
<svg class="a" style="left:585px;top:506px;" width="9" height="6" viewBox="0 0 9 6"><path d="M0.500 0.800h8l-4 4.700z" fill="#111"/></svg>
<svg class="a" style="left:673px;top:503px;" width="24" height="12" viewBox="0 0 24 12"><rect x="0" y="0.300" width="7.800" height="11" rx="1.300" fill="#474d5b"/><path d="M9.800 2.800l3.200 3-3.200 3z" fill="#474d5b"/><rect x="15" y="0.300" width="7.800" height="11" rx="1.300" fill="#474d5b"/></svg>
<div class="t" style="left:701.5px;top:501.92px;font-size:11.5px;color:#000;transform:scaleX(0.9546);">Раскадровка</div>
<svg class="a" style="left:776px;top:498px;" width="26" height="20" viewBox="0 0 26 20"><path d="M0.800 7h3.200l5-5v16l-5-5H0.800z" fill="#474d5b"/><path d="M8.500 4.500a7 7 0 0 1 0 11" stroke="#474d5b" stroke-width="2.200" fill="none"/><ellipse cx="9.300" cy="10" rx="1.600" ry="3.400" fill="#eaedf5"/><g fill="#474d5b"><rect x="15.800" y="1" width="2" height="18"/><rect x="21.200" y="1" width="2" height="18"/><rect x="14.600" y="5" width="4.400" height="3.400" rx="0.800"/><rect x="20" y="11.500" width="4.400" height="3.400" rx="0.800"/></g></svg>
<svg class="a" style="left:809px;top:499px;" width="21" height="20" viewBox="0 0 21 20"><rect x="1.600" y="1.300" width="17.600" height="13" rx="1" fill="#e3e6ee" stroke="#474d5b" stroke-width="1.700"/><rect x="4.400" y="4" width="12" height="7.600" fill="none" stroke="#474d5b" stroke-width="1" stroke-dasharray="1 1"/><rect x="9" y="15" width="2.800" height="2.500" fill="#474d5b"/><rect x="5.500" y="17.300" width="9.800" height="1.800" fill="#474d5b"/></svg>
<svg class="a" style="left:834px;top:506px;" width="9" height="6" viewBox="0 0 9 6"><path d="M0.500 0.800h8l-4 4.700z" fill="#111"/></svg>
<div class="t" style="left:860.5px;top:501.32px;font-size:11.5px;color:#000;transform:scaleX(0.8957);">Зум:</div>
<div class="a" style="left:890px;top:503px;width:103px;height:6px;background:#474d5b;"></div>
<div class="a" style="left:979px;top:498px;width:9px;height:17px;background:linear-gradient(#eceef5,#d3d8e4);border:1px solid #8a92a4;border-radius:1px"></div>
<svg class="a" style="left:1001px;top:501px;" width="16" height="16" viewBox="0 0 16 16"><path d="M1.200 5V1.200H5M11 1.200h3.800V5M14.800 11v3.800H11M5 14.800H1.200V11" stroke="#474d5b" stroke-width="2" fill="none"/><rect x="4.700" y="4.700" width="6.600" height="6.600" fill="#f3f4f8" stroke="#474d5b" stroke-width="1.300"/></svg>
<div class="a" style="left:8px;top:527px;width:1072px;height:25px;background:#eef0f6;"></div>
<div class="a" style="left:8px;top:551px;width:78px;height:1px;background:#8b909c;"></div>
<div class="a" style="left:86px;top:551px;width:994px;height:1px;background:#6e93dc;"></div>
<div class="a" style="left:85px;top:528px;width:1px;height:24px;background:#c9cdd8;"></div>
<svg class="a" style="left:85px;top:546px;" width="995" height="5" viewBox="0 0 995 5"><rect x="9" y="2" width="1" height="3" fill="#6d727e"/><rect x="18" y="2" width="1" height="3" fill="#6d727e"/><rect x="27" y="2" width="1" height="3" fill="#6d727e"/><rect x="36" y="2" width="1" height="3" fill="#6d727e"/><rect x="45" y="2" width="1" height="3" fill="#6d727e"/><rect x="54" y="2" width="1" height="3" fill="#6d727e"/><rect x="63" y="2" width="1" height="3" fill="#6d727e"/><rect x="72" y="2" width="1" height="3" fill="#6d727e"/><rect x="81" y="2" width="1" height="3" fill="#6d727e"/><rect x="90" y="2" width="1" height="3" fill="#6d727e"/><rect x="99" y="2" width="1" height="3" fill="#6d727e"/><rect x="108" y="0" width="1" height="5" fill="#4a4f5a"/><rect x="117" y="2" width="1" height="3" fill="#6d727e"/><rect x="126" y="2" width="1" height="3" fill="#6d727e"/><rect x="135" y="2" width="1" height="3" fill="#6d727e"/><rect x="144" y="2" width="1" height="3" fill="#6d727e"/><rect x="153" y="2" width="1" height="3" fill="#6d727e"/><rect x="162" y="2" width="1" height="3" fill="#6d727e"/><rect x="171" y="2" width="1" height="3" fill="#6d727e"/><rect x="180" y="2" width="1" height="3" fill="#6d727e"/><rect x="189" y="2" width="1" height="3" fill="#6d727e"/><rect x="198" y="2" width="1" height="3" fill="#6d727e"/><rect x="207" y="2" width="1" height="3" fill="#6d727e"/><rect x="216" y="0" width="1" height="5" fill="#4a4f5a"/><rect x="225" y="2" width="1" height="3" fill="#6d727e"/><rect x="234" y="2" width="1" height="3" fill="#6d727e"/><rect x="243" y="2" width="1" height="3" fill="#6d727e"/><rect x="252" y="2" width="1" height="3" fill="#6d727e"/><rect x="261" y="2" width="1" height="3" fill="#6d727e"/><rect x="270" y="2" width="1" height="3" fill="#6d727e"/><rect x="279" y="2" width="1" height="3" fill="#6d727e"/><rect x="288" y="2" width="1" height="3" fill="#6d727e"/><rect x="297" y="2" width="1" height="3" fill="#6d727e"/><rect x="306" y="2" width="1" height="3" fill="#6d727e"/><rect x="315" y="2" width="1" height="3" fill="#6d727e"/><rect x="324" y="0" width="1" height="5" fill="#4a4f5a"/><rect x="333" y="2" width="1" height="3" fill="#6d727e"/><rect x="342" y="2" width="1" height="3" fill="#6d727e"/><rect x="351" y="2" width="1" height="3" fill="#6d727e"/><rect x="360" y="2" width="1" height="3" fill="#6d727e"/><rect x="369" y="2" width="1" height="3" fill="#6d727e"/><rect x="378" y="2" width="1" height="3" fill="#6d727e"/><rect x="387" y="2" width="1" height="3" fill="#6d727e"/><rect x="396" y="2" width="1" height="3" fill="#6d727e"/><rect x="405" y="2" width="1" height="3" fill="#6d727e"/><rect x="414" y="2" width="1" height="3" fill="#6d727e"/><rect x="423" y="2" width="1" height="3" fill="#6d727e"/><rect x="432" y="0" width="1" height="5" fill="#4a4f5a"/><rect x="441" y="2" width="1" height="3" fill="#6d727e"/><rect x="450" y="2" width="1" height="3" fill="#6d727e"/><rect x="459" y="2" width="1" height="3" fill="#6d727e"/><rect x="468" y="2" width="1" height="3" fill="#6d727e"/><rect x="477" y="2" width="1" height="3" fill="#6d727e"/><rect x="486" y="2" width="1" height="3" fill="#6d727e"/><rect x="495" y="2" width="1" height="3" fill="#6d727e"/><rect x="504" y="2" width="1" height="3" fill="#6d727e"/><rect x="513" y="2" width="1" height="3" fill="#6d727e"/><rect x="522" y="2" width="1" height="3" fill="#6d727e"/><rect x="531" y="2" width="1" height="3" fill="#6d727e"/><rect x="540" y="0" width="1" height="5" fill="#4a4f5a"/><rect x="549" y="2" width="1" height="3" fill="#6d727e"/><rect x="558" y="2" width="1" height="3" fill="#6d727e"/><rect x="567" y="2" width="1" height="3" fill="#6d727e"/><rect x="576" y="2" width="1" height="3" fill="#6d727e"/><rect x="585" y="2" width="1" height="3" fill="#6d727e"/><rect x="594" y="2" width="1" height="3" fill="#6d727e"/><rect x="603" y="2" width="1" height="3" fill="#6d727e"/><rect x="612" y="2" width="1" height="3" fill="#6d727e"/><rect x="621" y="2" width="1" height="3" fill="#6d727e"/><rect x="630" y="2" width="1" height="3" fill="#6d727e"/><rect x="639" y="2" width="1" height="3" fill="#6d727e"/><rect x="648" y="0" width="1" height="5" fill="#4a4f5a"/><rect x="657" y="2" width="1" height="3" fill="#6d727e"/><rect x="666" y="2" width="1" height="3" fill="#6d727e"/><rect x="675" y="2" width="1" height="3" fill="#6d727e"/><rect x="684" y="2" width="1" height="3" fill="#6d727e"/><rect x="693" y="2" width="1" height="3" fill="#6d727e"/><rect x="702" y="2" width="1" height="3" fill="#6d727e"/><rect x="711" y="2" width="1" height="3" fill="#6d727e"/><rect x="720" y="2" width="1" height="3" fill="#6d727e"/><rect x="729" y="2" width="1" height="3" fill="#6d727e"/><rect x="738" y="2" width="1" height="3" fill="#6d727e"/><rect x="747" y="2" width="1" height="3" fill="#6d727e"/><rect x="756" y="0" width="1" height="5" fill="#4a4f5a"/><rect x="765" y="2" width="1" height="3" fill="#6d727e"/><rect x="774" y="2" width="1" height="3" fill="#6d727e"/><rect x="783" y="2" width="1" height="3" fill="#6d727e"/><rect x="792" y="2" width="1" height="3" fill="#6d727e"/><rect x="801" y="2" width="1" height="3" fill="#6d727e"/><rect x="810" y="2" width="1" height="3" fill="#6d727e"/><rect x="819" y="2" width="1" height="3" fill="#6d727e"/><rect x="828" y="2" width="1" height="3" fill="#6d727e"/><rect x="837" y="2" width="1" height="3" fill="#6d727e"/><rect x="846" y="2" width="1" height="3" fill="#6d727e"/><rect x="855" y="2" width="1" height="3" fill="#6d727e"/><rect x="864" y="0" width="1" height="5" fill="#4a4f5a"/><rect x="873" y="2" width="1" height="3" fill="#6d727e"/><rect x="882" y="2" width="1" height="3" fill="#6d727e"/><rect x="891" y="2" width="1" height="3" fill="#6d727e"/><rect x="900" y="2" width="1" height="3" fill="#6d727e"/><rect x="909" y="2" width="1" height="3" fill="#6d727e"/><rect x="918" y="2" width="1" height="3" fill="#6d727e"/><rect x="927" y="2" width="1" height="3" fill="#6d727e"/><rect x="936" y="2" width="1" height="3" fill="#6d727e"/><rect x="945" y="2" width="1" height="3" fill="#6d727e"/><rect x="954" y="2" width="1" height="3" fill="#6d727e"/><rect x="963" y="2" width="1" height="3" fill="#6d727e"/><rect x="972" y="0" width="1" height="5" fill="#4a4f5a"/><rect x="981" y="2" width="1" height="3" fill="#6d727e"/><rect x="990" y="2" width="1" height="3" fill="#6d727e"/></svg>
<div class="t" style="left:165.2px;top:532.52px;font-size:11.5px;color:#000;transform:scaleX(0.9861);">00:00:19.5</div>
<div class="t" style="left:273.2px;top:532.52px;font-size:11.5px;color:#000;transform:scaleX(0.9861);">00:00:39.0</div>
<div class="t" style="left:381.2px;top:532.52px;font-size:11.5px;color:#000;transform:scaleX(0.9861);">00:00:58.6</div>
<div class="t" style="left:489.2px;top:532.52px;font-size:11.5px;color:#000;transform:scaleX(0.9861);">00:01:18.1</div>
<div class="t" style="left:597.2px;top:532.52px;font-size:11.5px;color:#000;transform:scaleX(0.9861);">00:01:37.6</div>
<div class="t" style="left:705.2px;top:532.52px;font-size:11.5px;color:#000;transform:scaleX(0.9861);">00:01:57.2</div>
<div class="t" style="left:813.2px;top:532.52px;font-size:11.5px;color:#000;transform:scaleX(0.9861);">00:02:16.7</div>
<div class="t" style="left:921.2px;top:532.52px;font-size:11.5px;color:#000;transform:scaleX(0.9861);">00:02:36.3</div>
<div class="a" style="left:1029px;top:527px;width:51px;height:24px;overflow:hidden">
<div class="t" style="left:0.2px;top:5.52px;font-size:11.5px;color:#000;transform:scaleX(0.9861);">00:02:55.8</div>
</div>
<svg class="a" style="left:85px;top:539px;" width="9" height="13" viewBox="0 0 9 13"><path d="M0 0.300h8v9l-8 3.500z" fill="#3470dd"/></svg>
<div class="a" style="left:8px;top:552px;width:78px;height:69px;background:#eef0f7;"></div>
<div class="a" style="left:8px;top:621px;width:78px;height:193px;background:#dfe3ec;"></div>
<div class="a" style="left:86px;top:620px;width:994px;height:194px;background:#f6f7fc;"></div>
<div class="a" style="left:86px;top:553px;width:994px;height:67px;background:#3776de;"></div>
<div class="a" style="left:86px;top:553px;width:3px;height:67px;background:#f5c518;"></div>
<div class="a" style="left:89px;top:594px;width:991px;height:1px;background:#2b5cc0;"></div>
<div class="a" style="left:89px;top:595px;width:991px;height:1px;background:#cfe0fb;"></div>
<div class="a" style="left:89px;top:607.5px;width:991px;height:2.6px;background:#cf2740;"></div>
<svg class="a" style="left:85px;top:605px;" width="5" height="8" viewBox="0 0 5 8"><path d="M0 0.500l4.500 3.500-4.500 3.500z" fill="#e0202a"/></svg>
<svg class="a" style="left:89px;top:556px;" width="62" height="36" viewBox="0 0 393 221" preserveAspectRatio="none"><g clip-path="url(#cp)">
<rect width="393" height="60" fill="url(#sky)"/>
<g filter="url(#b1)">
<!-- far bluish ridge -->
<path d="M140 50 L160 49.500 L172 48 L190 47.500 L218 47.600 L232 46.500 V60 H140z" fill="#8e8d70"/>
<path d="M346 49.500 L362 49.500 L393 48.500 V58 H346z" fill="#8a938c"/>
<!-- left hills -->
<path d="M0 50.600 L21.700 50.600 L32.500 46.200 L43.400 44.400 L72.300 44.800 L81.300 48.800 L94 50.600 L108.400 48.800 L117.400 45.500 L133.700 45.500 L142.700 49.900 L159 50.600 L200 52 V80 H0z" fill="#8c8057"/>
<path d="M34 47 L44 45.200 L70 45.600 L78 49 L50 52 z" fill="#857a55"/>
<path d="M55 55 L90 52 L130 50 L150 53 L110 58 L70 60z" fill="#a49873"/>
<path d="M0 56 H210 V84 H0z" fill="#8d7f50"/>
<path d="M60 60 L120 57 L200 60 L200 70 L60 72z" fill="#94854f"/>
<!-- big right hill -->
<path d="M190 70 L205 62 L231 47.700 L245.700 42.600 L260 39 L281.800 39 L289 40.500 L300 38.700 L325 39 L337.800 43.400 L346.800 49.900 L361 52 L393 52 V84 H190z" fill="#a08854"/>
<path d="M262 40 L281 39.700 L288 41.500 L300 39.500 L324 40 L335 44 L320 46 L290 45 L270 44z" fill="#b5a377"/>
<path d="M205 64 L240 50 L275 47 L262 60 L240 72 L205 76z" fill="#ab9058"/>
<path d="M262 60 L290 50 L330 50 L345 56 L320 70 L275 76z" fill="#8d7847"/>
<path d="M330 52 L393 54 V80 H320z" fill="#9a8652"/>
<path d="M197 64 L228 51 L233 52.500 L205 67.500z" fill="#47432f"/>
<path d="M155 68 L172 66 L172 70 L156 72z" fill="#5c5636"/>
</g>
<!-- plains -->
<g filter="url(#b1)">
<rect x="0" y="77" width="393" height="60" fill="#8d8548"/>
<path d="M100 78 H393 V84 H100z" fill="#8b7a44"/>
<path d="M200 78 L393 77 V85 H200z" fill="#595b39"/>
<path d="M100 84 H393 V97 H120z" fill="#9a9249"/>
<path d="M300 80 L393 78 V92 H330 L300 88z" fill="#45463a"/>
<path d="M310 82 H393 V89 H316z" fill="#353a3c"/>
<path d="M180 94 L282 96 L282 100 L200 99z" fill="#48462e"/>
<path d="M160 97 H393 V124 H160z" fill="#9c9449"/>
<path d="M318 92 H393 V96 H318z" fill="#6f6d4c"/>
<path d="M296 84 L312 84 L314 95 L296 95z" fill="#8a8c5c"/>
</g>
<!-- left grassy slope -->
<g filter="url(#b2)">
<path d="M0 63 L18 67 L40 70.500 L97.500 86.700 L119 92 L144.500 95.700 L170 104.800 L195 112 L216.800 119 L216.800 124 L151.700 117 L119 110 L94 106 L65 110 L36 108 L0 106z" fill="url(#gr1)"/>
<path d="M0 66 L30 72 L70 84 L90 96 L60 104 L0 100z" fill="#c2a548"/>
<path d="M36 65.500 L58 70 L80 77 L97 85 L94 89 L62 79 L37 70z" fill="#474c25"/>
<path d="M66 80 L110 91 L150 100 L146 105 L100 95 L66 86z" fill="#86683f"/>
<path d="M56 104 L80 100 L92 104 L86 116 L62 116z" fill="#adb44a"/>
<path d="M95 102 L140 102 L143 113 L96 114z" fill="#33322a"/>
<path d="M224 106 L250 104 L258 114 L256 126 L226 124z" fill="#9fae58"/>
<path d="M258 105 L274 104 L275 119 L258 119z" fill="#3c392e"/>
</g>
<!-- shadowed foreground -->
<g filter="url(#b4)">
<path d="M-10 106 L40 108 L95 108 L150 116 L215 122 L230 124 L230 240 L-10 240z" fill="#7b7866"/>
<path d="M-10 106 L50 108 L80 118 L60 140 L-10 140z" fill="#66644e"/><path d="M-10 105 L40 107 L92 107 L92 119 L-10 121z" fill="#3f4034"/>
<path d="M10 120 L95 116 L100 200 L20 205z" fill="#858069"/>
<path d="M92 124 L150 120 L190 150 L170 215 L110 225 L96 160z" fill="#646a52"/>
<path d="M148 116 L218 120 L222 146 L160 146z" fill="#8c8473"/>
<path d="M-10 160 L24 155 L40 190 L20 230 L-10 230z" fill="#45473a"/>
<path d="M100 165 H165 V235 H100z" fill="#4f543f"/>
<path d="M110 120 L135 118 L140 135 L112 138z" fill="#45453a"/>
</g>
<g filter="url(#b2)">
<path d="M10.800 221 L18 202 L36 187.900 L54 177 L59.600 178.800 L57.800 195 L43.400 206 L29 221z" fill="#b6c3d0"/>
<path d="M133 147 L150 144 L170 146 L172 153 L140 156z" fill="#aeb9bc"/><path d="M128 122 L150 120 L160 123 L158 129 L132 130z" fill="#c6c7c0"/>
<path d="M56 150 Q64 120 72 150 T70 221 L54 221z" fill="#938659" opacity="0.750"/>
<path d="M150 122 L215 126 L215 142 L152 140z" fill="#7d7466" opacity="0.800"/>
<g stroke="#b9b29a" stroke-width="1.200" opacity="0.700"><path d="M158 118v22M166 116v26M175 120v22M184 118v25M193 121v22M202 120v22"/></g>
</g>
<!-- big blurred rock on right -->
<g filter="url(#b7)">
<path d="M144.500 226 L155.300 206 L169.800 187.900 L184.200 169.800 L202.300 148 L220.400 131.900 L245.700 124.600 L271 122.800 L281.800 108.400 L299.900 97.500 L325 99.300 L346.800 104.800 L410 112 V240 H140z" fill="#9ea6be"/>
<path d="M215 140 L300 128 L345 150 L300 200 L220 215 L175 200z" fill="#b0b8d0"/>
<path d="M286 100 L410 100 L410 128 L340 128 L290 122 L272 124z" fill="#cbbd8f"/>
<path d="M275 128 L410 124 V150 L330 152z" fill="#63656c"/>
<path d="M330 146 H410 V195 H345z" fill="#adb2c4"/>
<path d="M280 178 L340 170 L362 196 L300 214z" fill="#6f7580"/>
<path d="M318 192 L410 184 V240 H296z" fill="#b6ae96"/>
<path d="M150 206 L196 170 L232 188 L202 232 L150 232z" fill="#b2bbd2"/>
</g>
<g filter="url(#b4)">
<path d="M232 150 L262 146 L270 158 L240 164z" fill="#5e6575"/>
<path d="M190 176 L222 172 L226 186 L196 190z" fill="#636a79"/>
<path d="M340 146 L372 144 L376 156 L344 158z" fill="#40475a"/>
<path d="M258 126 L300 122 L330 128 L300 138 L262 138z" fill="#5a5a54"/>
<path d="M262 168 L296 166 L296 178 L262 180z" fill="#c4cadc"/>
<path d="M238 194 L262 190 L262 212 L244 214z" fill="#7a8274"/>
<path d="M300 128 L330 126 L330 150 L304 150z" fill="#aab2c6"/>
</g>
<rect width="393" height="221" fill="url(#vig)"/>
</g></svg>
<div class="t b" style="left:155.5px;top:578.52px;font-size:11.5px;color:#fff;transform:scaleX(1.0498);">Дикая природа Уругвая.mp4</div>
<div class="a" style="left:86px;top:620px;width:994px;height:1px;background:#e3e6ee;"></div>
<div class="a" style="left:86px;top:647px;width:994px;height:1px;background:#d5d8df;"></div>
<div class="a" style="left:86px;top:707px;width:994px;height:1px;background:#d5d8df;"></div>
<div class="a" style="left:86px;top:733px;width:994px;height:1px;background:#d5d8df;"></div>
<div class="a" style="left:86px;top:773px;width:994px;height:1px;background:#d5d8df;"></div>
<div class="a" style="left:8px;top:707px;width:78px;height:1px;background:#d3d7e1;"></div>
<div class="a" style="left:8px;top:773px;width:78px;height:1px;background:#d3d7e1;"></div>
<div class="a" style="left:8px;top:813px;width:1072px;height:1px;background:#cfd2da;"></div>
<div class="a" style="left:85px;top:552px;width:1px;height:261px;background:repeating-linear-gradient(#000 0,#000 1px,transparent 1px,transparent 2px)"></div>
<svg class="a" style="left:54px;top:578px;" width="22" height="16" viewBox="0 0 22 16"><rect x="0.700" y="0.700" width="20.600" height="14.600" fill="#f0f2f7" stroke="#565c69" stroke-width="1.300"/><path d="M4.800 1v14M17.200 1v14" stroke="#565c69" stroke-width="1"/><rect x="2.2" y="2.6" width="1.800" height="1.800" fill="#565c69"/><rect x="2.2" y="6.0" width="1.800" height="1.800" fill="#565c69"/><rect x="2.2" y="9.4" width="1.800" height="1.800" fill="#565c69"/><rect x="2.2" y="12.6" width="1.800" height="1.800" fill="#565c69"/><rect x="18.2" y="2.6" width="1.800" height="1.800" fill="#565c69"/><rect x="18.2" y="6.0" width="1.800" height="1.800" fill="#565c69"/><rect x="18.2" y="9.4" width="1.800" height="1.800" fill="#565c69"/><rect x="18.2" y="12.6" width="1.800" height="1.800" fill="#565c69"/></svg>
<svg class="a" style="left:61px;top:604.5px;" width="15" height="11" viewBox="0 0 15 11"><path d="M0.500 3.500h3.300l4-3.500v11l-4-3.500H0.500z" fill="#565c69"/><rect x="9" y="4.600" width="5.500" height="1.900" fill="#565c69"/></svg>
<svg class="a" style="left:60.5px;top:691px;" width="15" height="11" viewBox="0 0 15 11"><path d="M0.500 3.500h3.300l4-3.500v11l-4-3.500H0.500z" fill="#565c69"/><rect x="9" y="4.600" width="5.500" height="1.900" fill="#565c69"/></svg>
<svg class="a" width="0" height="0"><defs><linearGradient id="lkg" x1="0" y1="0" x2="0" y2="1"><stop offset="0" stop-color="#8f94a1"/><stop offset="0.600" stop-color="#a3a8b4"/><stop offset="1" stop-color="#c0c4cf"/></linearGradient></defs></svg>
<svg class="a" style="left:13px;top:628.5px;" width="16" height="12" viewBox="0 0 16 12"><path d="M0.800 6.200C3.500 1.800 12 1.800 15 6.200 12 10.600 3.500 10.600 0.800 6.200z" fill="#f2f3f7" stroke="#565c69" stroke-width="1.300"/><circle cx="8" cy="6.200" r="3" fill="#565c69"/><circle cx="8" cy="6.200" r="1.100" fill="#cfd3dc"/><path d="M0.500 3.500C3.500 -0.500 12.500 -0.500 15.500 3.500" stroke="#565c69" stroke-width="1.100" fill="none"/></svg>
<svg class="a" style="left:34px;top:626.5px;" width="13" height="16" viewBox="0 0 13 16"><path d="M1.600 5.200a4.200 4.200 0 0 1 8.600 -0.600V7.500" stroke="#999eab" stroke-width="1.900" fill="none"/><rect x="0.200" y="6.800" width="11.800" height="8.800" rx="1.800" fill="url(#lkg)"/></svg>
<svg class="a" style="left:13px;top:671.5px;" width="16" height="12" viewBox="0 0 16 12"><path d="M0.800 6.200C3.500 1.800 12 1.800 15 6.200 12 10.600 3.500 10.600 0.800 6.200z" fill="#f2f3f7" stroke="#565c69" stroke-width="1.300"/><circle cx="8" cy="6.200" r="3" fill="#565c69"/><circle cx="8" cy="6.200" r="1.100" fill="#cfd3dc"/><path d="M0.500 3.500C3.500 -0.500 12.500 -0.500 15.500 3.500" stroke="#565c69" stroke-width="1.100" fill="none"/></svg>
<svg class="a" style="left:34px;top:669.5px;" width="13" height="16" viewBox="0 0 13 16"><path d="M1.600 5.200a4.200 4.200 0 0 1 8.600 -0.600V7.500" stroke="#999eab" stroke-width="1.900" fill="none"/><rect x="0.200" y="6.800" width="11.800" height="8.800" rx="1.800" fill="url(#lkg)"/></svg>
<svg class="a" style="left:13px;top:714.5px;" width="16" height="12" viewBox="0 0 16 12"><path d="M0.800 6.200C3.500 1.800 12 1.800 15 6.200 12 10.600 3.500 10.600 0.800 6.200z" fill="#f2f3f7" stroke="#565c69" stroke-width="1.300"/><circle cx="8" cy="6.200" r="3" fill="#565c69"/><circle cx="8" cy="6.200" r="1.100" fill="#cfd3dc"/><path d="M0.500 3.500C3.500 -0.500 12.500 -0.500 15.500 3.500" stroke="#565c69" stroke-width="1.100" fill="none"/></svg>
<svg class="a" style="left:34px;top:712.5px;" width="13" height="16" viewBox="0 0 13 16"><path d="M1.600 5.200a4.200 4.200 0 0 1 8.600 -0.600V7.500" stroke="#999eab" stroke-width="1.900" fill="none"/><rect x="0.200" y="6.800" width="11.800" height="8.800" rx="1.800" fill="url(#lkg)"/></svg>
<svg class="a" style="left:13px;top:747.5px;" width="16" height="12" viewBox="0 0 16 12"><path d="M0.800 6.200C3.500 1.800 12 1.800 15 6.200 12 10.600 3.500 10.600 0.800 6.200z" fill="#f2f3f7" stroke="#565c69" stroke-width="1.300"/><circle cx="8" cy="6.200" r="3" fill="#565c69"/><circle cx="8" cy="6.200" r="1.100" fill="#cfd3dc"/><path d="M0.500 3.500C3.500 -0.500 12.500 -0.500 15.500 3.500" stroke="#565c69" stroke-width="1.100" fill="none"/></svg>
<svg class="a" style="left:34px;top:745.5px;" width="13" height="16" viewBox="0 0 13 16"><path d="M1.600 5.200a4.200 4.200 0 0 1 8.600 -0.600V7.500" stroke="#999eab" stroke-width="1.900" fill="none"/><rect x="0.200" y="6.800" width="11.800" height="8.800" rx="1.800" fill="url(#lkg)"/></svg>
<svg class="a" style="left:13px;top:787.5px;" width="16" height="12" viewBox="0 0 16 12"><path d="M0.800 6.200C3.500 1.800 12 1.800 15 6.200 12 10.600 3.500 10.600 0.800 6.200z" fill="#f2f3f7" stroke="#565c69" stroke-width="1.300"/><circle cx="8" cy="6.200" r="3" fill="#565c69"/><circle cx="8" cy="6.200" r="1.100" fill="#cfd3dc"/><path d="M0.500 3.500C3.500 -0.500 12.500 -0.500 15.500 3.500" stroke="#565c69" stroke-width="1.100" fill="none"/></svg>
<svg class="a" style="left:34px;top:785.5px;" width="13" height="16" viewBox="0 0 13 16"><path d="M1.600 5.200a4.200 4.200 0 0 1 8.600 -0.600V7.500" stroke="#999eab" stroke-width="1.900" fill="none"/><rect x="0.200" y="6.800" width="11.800" height="8.800" rx="1.800" fill="url(#lkg)"/></svg>
<svg class="a" style="left:57px;top:626px;" width="16" height="15" viewBox="0 0 16 15"><rect x="0.600" y="0.600" width="14.800" height="13.800" fill="#eceef4" stroke="#565c69" stroke-width="1.200"/><path d="M3.400 1v13M12.600 1v13" stroke="#565c69" stroke-width="0.900"/><rect x="1.5" y="1.8" width="1.100" height="1.200" fill="#565c69"/><rect x="1.5" y="3.9" width="1.100" height="1.200" fill="#565c69"/><rect x="1.5" y="6.0" width="1.100" height="1.200" fill="#565c69"/><rect x="1.5" y="8.1" width="1.100" height="1.200" fill="#565c69"/><rect x="1.5" y="10.2" width="1.100" height="1.200" fill="#565c69"/><rect x="1.5" y="12.3" width="1.100" height="1.200" fill="#565c69"/><rect x="13.4" y="1.8" width="1.100" height="1.200" fill="#565c69"/><rect x="13.4" y="3.9" width="1.100" height="1.200" fill="#565c69"/><rect x="13.4" y="6.0" width="1.100" height="1.200" fill="#565c69"/><rect x="13.4" y="8.1" width="1.100" height="1.200" fill="#565c69"/><rect x="13.4" y="10.2" width="1.100" height="1.200" fill="#565c69"/><rect x="13.4" y="12.3" width="1.100" height="1.200" fill="#565c69"/><path d="M8 3l1.400 2.900 3.200 0.400-2.300 2.200 0.600 3.200-2.900-1.600-2.900 1.600 0.600-3.200-2.300-2.200 3.200-0.400z" fill="#565c69"/></svg>
<svg class="a" style="left:57px;top:669px;" width="17" height="16" viewBox="0 0 17 16"><rect x="0.600" y="0.600" width="11" height="11" fill="#e4e7ef" stroke="#565c69" stroke-width="1.200"/><rect x="4.600" y="3.800" width="11.600" height="11.600" fill="#e4e7ef" stroke="#565c69" stroke-width="1.300"/><path d="M7.200 4v11.200M13.600 4v11.200" stroke="#565c69" stroke-width="0.900"/><rect x="5.4" y="5.2" width="1" height="1.200" fill="#565c69"/><rect x="5.4" y="7.8" width="1" height="1.200" fill="#565c69"/><rect x="5.4" y="10.4" width="1" height="1.200" fill="#565c69"/><rect x="5.4" y="13.0" width="1" height="1.200" fill="#565c69"/><rect x="14.4" y="5.2" width="1" height="1.200" fill="#565c69"/><rect x="14.4" y="7.8" width="1" height="1.200" fill="#565c69"/><rect x="14.4" y="10.4" width="1" height="1.200" fill="#565c69"/><rect x="14.4" y="13.0" width="1" height="1.200" fill="#565c69"/></svg>
<svg class="a" style="left:58px;top:712px;" width="14" height="14" viewBox="0 0 14 14"><path d="M0.500 0.500h12.600v4.200h-1.300c-0.200-1.700-0.900-2.500-2.400-2.500h-0.900v8.800c0 0.900 0.400 1.200 1.700 1.300v1.200H3.600v-1.200c1.300-0.100 1.700-0.400 1.700-1.300V2.200h-0.900c-1.500 0-2.200 0.800-2.400 2.500H0.500z" fill="#565c69"/></svg>
<svg class="a" style="left:57px;top:744px;" width="16" height="17" viewBox="0 0 16 17"><path d="M5 3.200L14.500 1v10.200a2.700 2.300 0 1 1-1.600-2.100V4.600L6.600 6v7.400a2.700 2.300 0 1 1-1.600-2.100z" fill="#565c69"/></svg>
<svg class="a" style="left:56px;top:784px;" width="18" height="19" viewBox="0 0 18 19"><circle cx="11.900" cy="6" r="5.100" fill="#565c69"/><path d="M11.140 12.400L5.840 8.180L1.890 15.230L5.170 17.830z" fill="#565c69"/><path d="M7.070 4.070L14.870 10.270" stroke="#dfe3ec" stroke-width="0.900"/></svg>
<div class="a" style="left:8px;top:814px;width:1072px;height:15px;background:#ffffff;"></div>
<svg class="a" style="left:12px;top:817px;" width="6" height="9" viewBox="0 0 6 9"><path d="M5 0.500v8L0.700 4.500z" fill="#111"/></svg>
<svg class="a" style="left:1070px;top:817px;" width="6" height="9" viewBox="0 0 6 9"><path d="M1 0.500v8l4.300-4z" fill="#111"/></svg>
<div class="a" style="left:23px;top:818px;width:38px;height:7px;background:#c4c8db;"></div>
</body></html>
